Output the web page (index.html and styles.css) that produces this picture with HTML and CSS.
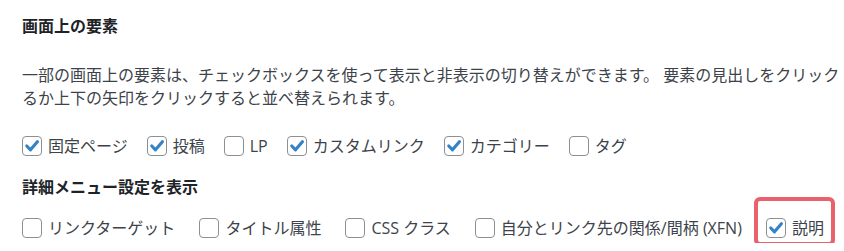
FILE: index.html
```html
<!DOCTYPE html>
<html lang="ja">
<head>
<meta charset="utf-8">
<title>画面上の要素</title>
<link rel="stylesheet" href="styles.css">
</head>
<body>
<div class="panel">
  <h2 class="title">画面上の要素</h2>
  <p class="desc">一部の画面上の要素は、チェックボックスを使って表示と非表示の切り替えができます。 要素の見出しをクリックるか上下の矢印をクリックすると並べ替えられます。</p>
  <div class="prefs prefs-boxes">
    <label class="opt"><span class="cb checked"><svg viewBox="0 0 20 20" width="20" height="20"><path d="M4.8 10 L8.5 13.8 L15.4 5.8" /></svg></span>固定ページ</label>
    <label class="opt"><span class="cb checked"><svg viewBox="0 0 20 20" width="20" height="20"><path d="M4.8 10 L8.5 13.8 L15.4 5.8" /></svg></span>投稿</label>
    <label class="opt"><span class="cb"></span>LP</label>
    <label class="opt"><span class="cb checked"><svg viewBox="0 0 20 20" width="20" height="20"><path d="M4.8 10 L8.5 13.8 L15.4 5.8" /></svg></span>カスタムリンク</label>
    <label class="opt"><span class="cb checked"><svg viewBox="0 0 20 20" width="20" height="20"><path d="M4.8 10 L8.5 13.8 L15.4 5.8" /></svg></span>カテゴリー</label>
    <label class="opt"><span class="cb"></span>タグ</label>
  </div>
  <h2 class="title title-adv">詳細メニュー設定を表示</h2>
  <div class="prefs prefs-adv">
    <label class="opt"><span class="cb"></span>リンクターゲット</label>
    <label class="opt"><span class="cb"></span>タイトル属性</label>
    <label class="opt"><span class="cb"></span>CSS クラス</label>
    <label class="opt"><span class="cb"></span>自分とリンク先の関係/間柄 (XFN)</label>
    <label class="opt opt-highlight"><span class="cb checked"><svg viewBox="0 0 20 20" width="20" height="20"><path d="M4.8 10 L8.5 13.8 L15.4 5.8" /></svg></span>説明<span class="highlight"></span></label>
  </div>
</div>
</body>
</html>
```
FILE: styles.css
```css
html, body {
  margin: 0;
  padding: 0;
  background: #ffffff;
}

body {
  font-family: "Open Sans", "Noto Sans CJK JP", sans-serif;
  font-size: 16px;
  color: #3c434a;
}

.panel {
  padding: 14px 0 0 22px;
}

.title {
  margin: 0;
  font-size: 16px;
  font-weight: 700;
  line-height: 24px;
  color: #1d2327;
}

.desc {
  margin: 26px 0 0 0;
  line-height: 23px;
  width: 822px;
  word-break: break-all;
}

.prefs {
  display: flex;
  align-items: center;
  height: 30px;
}

.prefs-boxes {
  margin-top: 21px;
  gap: 19px;
}

.title-adv {
  margin-top: 14px;
}

.prefs-adv {
  margin-top: 14px;
  gap: 24px;
}

.opt {
  display: flex;
  align-items: center;
  gap: 6px;
  height: 30px;
  white-space: nowrap;
  line-height: 30px;
}

.cb {
  box-sizing: border-box;
  width: 20px;
  height: 20px;
  border: 1px solid #8c8f94;
  border-radius: 4px;
  background: #ffffff;
  flex: none;
  position: relative;
}

.cb svg {
  position: absolute;
  left: -1px;
  top: -1px;
  fill: none;
  stroke: #3582c4;
  stroke-width: 3.2;
  stroke-linecap: round;
  stroke-linejoin: round;
}

.opt-highlight {
  position: relative;
}

.highlight {
  position: absolute;
  left: -12px;
  right: -11px;
  top: -16px;
  bottom: -3px;
  border: 4px solid #e8616b;
  border-radius: 6px;
  pointer-events: none;
}
```
